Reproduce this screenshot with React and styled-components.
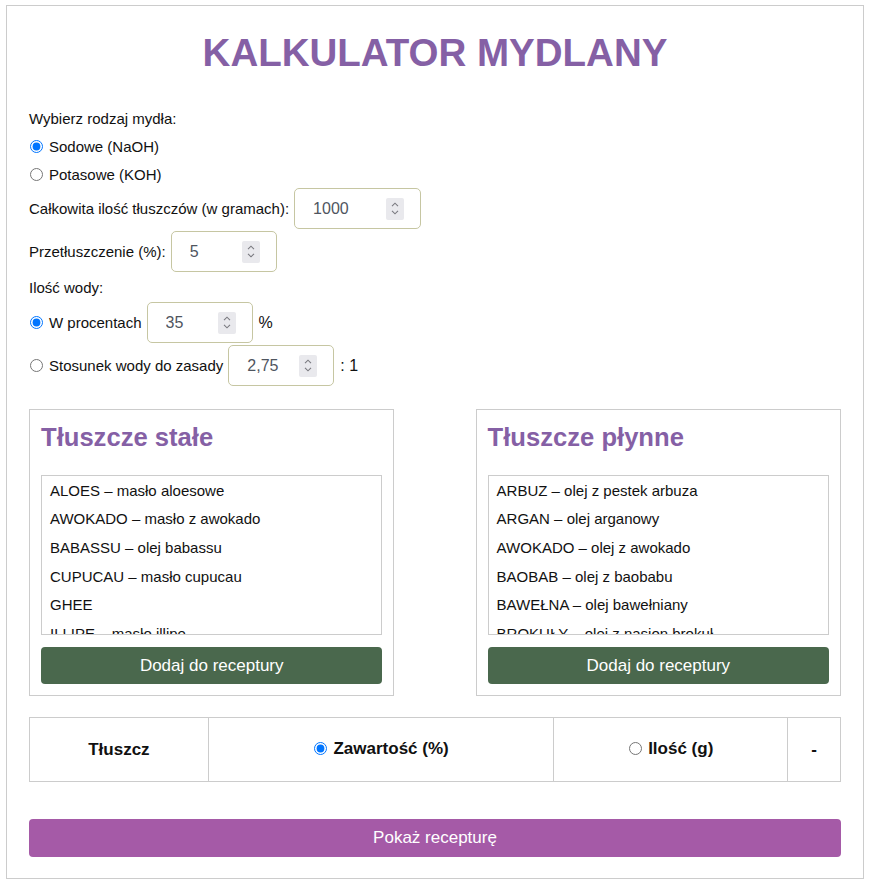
import React, { useState } from "react";
import styled, { createGlobalStyle } from "styled-components";

const GlobalStyle = createGlobalStyle`
  body {
    margin: 0;
    background: #fff;
    font-family: "Liberation Sans", Arial, sans-serif;
    color: #111;
  }
  * {
    box-sizing: border-box;
  }
`;

const Container = styled.div`
  margin: 5px 6px 6px;
  border: 1px solid #ccc;
  padding: 0 22px 21px;
`;

const Title = styled.h1`
  margin: 25px 0 29px;
  text-align: center;
  font-size: 38.5px;
  line-height: 44px;
  font-weight: bold;
  color: #8560a5;
`;

const TextRow = styled.div`
  display: flex;
  align-items: center;
  height: 28px;
  font-size: 15px;
`;

const FieldRow = styled.div`
  display: flex;
  align-items: center;
  height: 41px;
  margin-top: ${(p) => p.$mt || 0}px;
  margin-bottom: ${(p) => (p.$mb === undefined ? 2 : p.$mb)}px;
  font-size: 15px;
`;

const Radio = styled.input.attrs({ type: "radio" })`
  width: 13px;
  height: 13px;
  margin: 0 6px 0 1px;
  accent-color: #0075ff;
`;

const InputWrap = styled.span`
  position: relative;
  display: inline-block;
  margin-left: 5px;
`;

const TextInput = styled.input`
  display: block;
  width: ${(p) => p.$w}px;
  height: 41px;
  padding: 0 40px 0 18px;
  border: 1px solid #c6c6a2;
  border-radius: 5px;
  font-family: "Liberation Sans", Arial, sans-serif;
  font-size: 16px;
  color: #4f5560;
  background: #fff;
  outline: none;
`;

const Spinner = styled.span`
  position: absolute;
  right: 17px;
  top: 50%;
  transform: translateY(-50%);
  display: flex;
  flex-direction: column;
  align-items: center;
  justify-content: center;
  gap: 3px;
  width: 18px;
  height: 22px;
  background: #e9e9ed;
  border-radius: 2px;
`;

const Suffix = styled.span`
  margin-left: 6px;
  font-size: 16px;
`;

const Panels = styled.div`
  display: flex;
  justify-content: space-between;
  margin-top: 23px;
`;

const Panel = styled.div`
  width: 45%;
  border: 1px solid #ccc;
  padding: 0 11px 11px;
`;

const PanelTitle = styled.h2`
  margin: 13px 0 23px;
  font-size: 25.6px;
  line-height: 29px;
  font-weight: bold;
  color: #8560a5;
`;

const ListBox = styled.div`
  height: 160px;
  border: 1px solid #ccc;
  overflow-y: auto;
  scrollbar-width: none;
`;

const Option = styled.div`
  display: flex;
  align-items: center;
  height: 28.6px;
  padding: 0 8px;
  font-size: 15px;
  white-space: nowrap;
  cursor: default;
  background: ${(p) => (p.$selected ? "#cfd8e8" : "transparent")};
`;

const AddButton = styled.button`
  display: block;
  width: 100%;
  height: 37px;
  margin-top: 12px;
  border: none;
  border-radius: 4px;
  background: #4a684d;
  color: #fff;
  font-family: "Liberation Sans", Arial, sans-serif;
  font-size: 17px;
  cursor: pointer;
`;

const Table = styled.table`
  width: 100%;
  margin-top: 21px;
  border-collapse: collapse;
`;

const Th = styled.th`
  width: ${(p) => p.$w}px;
  height: 64px;
  padding: 0;
  border: 1px solid #ccc;
  font-size: 17px;
  font-weight: bold;
  text-align: center;
`;

const ThLabel = styled.label`
  display: inline-flex;
  align-items: center;
`;

const ShowButton = styled.button`
  display: block;
  width: 100%;
  height: 38px;
  margin-top: 37px;
  border: none;
  border-radius: 4px;
  background: #a55aa7;
  color: #fff;
  font-family: "Liberation Sans", Arial, sans-serif;
  font-size: 17px;
  cursor: pointer;
`;

const solidFats = [
  "ALOES – masło aloesowe",
  "AWOKADO – masło z awokado",
  "BABASSU – olej babassu",
  "CUPUCAU – masło cupucau",
  "GHEE",
  "ILLIPE – masło illipe",
  "KAKAO – masło kakaowe",
  "KOKOS – olej kokosowy",
];

const liquidFats = [
  "ARBUZ – olej z pestek arbuza",
  "ARGAN – olej arganowy",
  "AWOKADO – olej z awokado",
  "BAOBAB – olej z baobabu",
  "BAWEŁNA – olej bawełniany",
  "BROKUŁY – olej z nasion brokuł",
  "JOJOBA – olej jojoba",
];

function Chevron({ up }) {
  return (
    <svg width="8" height="5" viewBox="0 0 8 5">
      <path
        d={up ? "M1 4.2 L4 1.2 L7 4.2" : "M1 0.8 L4 3.8 L7 0.8"}
        fill="none"
        stroke="#7a7a80"
        strokeWidth="1.1"
      />
    </svg>
  );
}

function NumberField({ width, value }) {
  return (
    <InputWrap>
      <TextInput $w={width} defaultValue={value} inputMode="decimal" />
      <Spinner>
        <Chevron up />
        <Chevron />
      </Spinner>
    </InputWrap>
  );
}

function FatPanel({ title, items }) {
  const [selected, setSelected] = useState(null);
  return (
    <Panel>
      <PanelTitle>{title}</PanelTitle>
      <ListBox>
        {items.map((item) => (
          <Option
            key={item}
            $selected={selected === item}
            onClick={() => setSelected(item)}
          >
            {item}
          </Option>
        ))}
      </ListBox>
      <AddButton>Dodaj do receptury</AddButton>
    </Panel>
  );
}

export default function App() {
  const [soap, setSoap] = useState("naoh");
  const [water, setWater] = useState("percent");
  const [mode, setMode] = useState("percent");

  return (
    <>
      <GlobalStyle />
      <Container>
        <Title>KALKULATOR MYDLANY</Title>

        <TextRow>Wybierz rodzaj mydła:</TextRow>
        <TextRow>
          <Radio name="soap" checked={soap === "naoh"} onChange={() => setSoap("naoh")} />
          Sodowe (NaOH)
        </TextRow>
        <TextRow>
          <Radio name="soap" checked={soap === "koh"} onChange={() => setSoap("koh")} />
          Potasowe (KOH)
        </TextRow>

        <FieldRow>
          Całkowita ilość tłuszczów (w gramach):
          <NumberField width={127} value="1000" />
        </FieldRow>
        <FieldRow $mb={1}>
          Przetłuszczenie (%):
          <NumberField width={106} value="5" />
        </FieldRow>

        <TextRow>Ilość wody:</TextRow>
        <FieldRow $mt={1}>
          <Radio name="water" checked={water === "percent"} onChange={() => setWater("percent")} />
          W procentach
          <NumberField width={106} value="35" />
          <Suffix>%</Suffix>
        </FieldRow>
        <FieldRow $mb={0}>
          <Radio name="water" checked={water === "ratio"} onChange={() => setWater("ratio")} />
          Stosunek wody do zasady
          <NumberField width={106} value="2,75" />
          <Suffix>: 1</Suffix>
        </FieldRow>

        <Panels>
          <FatPanel title="Tłuszcze stałe" items={solidFats} />
          <FatPanel title="Tłuszcze płynne" items={liquidFats} />
        </Panels>

        <Table>
          <thead>
            <tr>
              <Th $w={179}>Tłuszcz</Th>
              <Th $w={346}>
                <ThLabel>
                  <Radio name="mode" checked={mode === "percent"} onChange={() => setMode("percent")} />
                  Zawartość (%)
                </ThLabel>
              </Th>
              <Th $w={234}>
                <ThLabel>
                  <Radio name="mode" checked={mode === "grams"} onChange={() => setMode("grams")} />
                  Ilość (g)
                </ThLabel>
              </Th>
              <Th $w={53}>-</Th>
            </tr>
          </thead>
        </Table>

        <ShowButton>Pokaż recepturę</ShowButton>
      </Container>
    </>
  );
}
